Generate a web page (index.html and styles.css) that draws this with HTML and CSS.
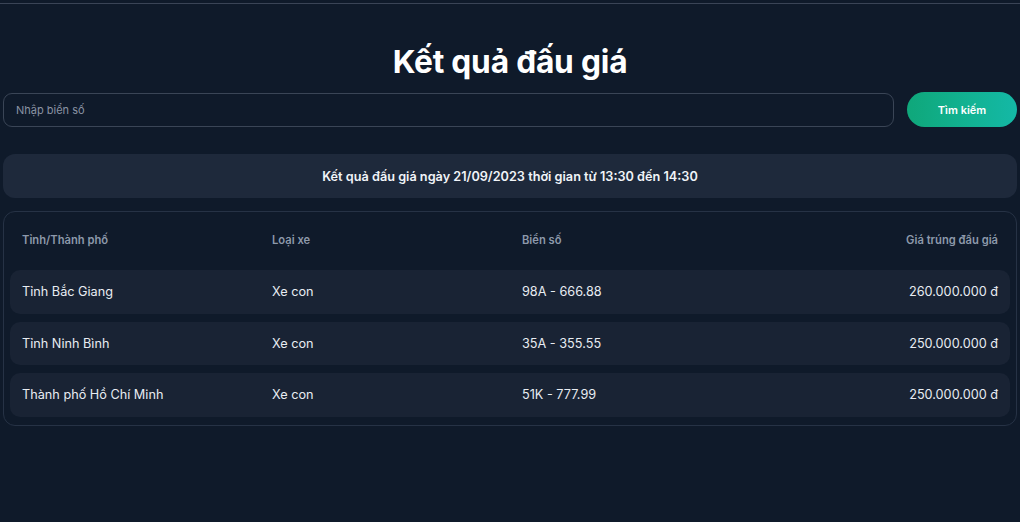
FILE: index.html
```html
<!DOCTYPE html>
<html lang="vi">
<head>
<meta charset="utf-8">
<title>Kết quả đấu giá</title>
<link rel="stylesheet" href="styles.css">
</head>
<body>
<div class="topbar"></div>
<main class="page">
  <h1 class="title">Kết quả đấu giá</h1>
  <form class="search">
    <input class="search-input" type="text" placeholder="Nhập biển số">
    <button class="search-btn" type="button">Tìm kiếm</button>
  </form>
  <div class="banner">Kết quả đấu giá ngày 21/09/2023 thời gian từ 13:30 đến 14:30</div>
  <div class="table">
    <div class="row head">
      <div class="cell">Tỉnh/Thành phố</div>
      <div class="cell">Loại xe</div>
      <div class="cell">Biển số</div>
      <div class="cell right">Giá trúng đấu giá</div>
    </div>
    <div class="row item">
      <div class="cell">Tỉnh Bắc Giang</div>
      <div class="cell">Xe con</div>
      <div class="cell">98A - 666.88</div>
      <div class="cell right">260.000.000 đ</div>
    </div>
    <div class="row item">
      <div class="cell">Tỉnh Ninh Bình</div>
      <div class="cell">Xe con</div>
      <div class="cell">35A - 355.55</div>
      <div class="cell right">250.000.000 đ</div>
    </div>
    <div class="row item">
      <div class="cell">Thành phố Hồ Chí Minh</div>
      <div class="cell">Xe con</div>
      <div class="cell">51K - 777.99</div>
      <div class="cell right">250.000.000 đ</div>
    </div>
  </div>
</main>
</body>
</html>
```

FILE: styles.css
```css
* { box-sizing: border-box; }
html, body {
  margin: 0;
  padding: 0;
  background: #0f1a2a;
  font-family: Inter, "Noto Sans", sans-serif;
  color: #e5e9f0;
}
.topbar {
  height: 4px;
  border-bottom: 1px solid #3a4456;
}
.page {
  padding: 0 3px;
  display: flex;
  flex-direction: column;
}
.title {
  margin: 33px 0 0;
  height: 50px;
  line-height: 50px;
  text-align: center;
  font-size: 31.7px;
  font-weight: 700;
  color: #ffffff;
  letter-spacing: -0.2px;
}
.search {
  margin: 5px 0 0;
  display: flex;
  gap: 13px;
  align-items: center;
}
.search-input {
  flex: 1;
  height: 34px;
  border: 1px solid #3a4556;
  border-radius: 9px;
  background: #0f1a2a;
  color: #e5e9f0;
  padding: 0 12px;
  font-family: Inter, "Noto Sans", sans-serif;
  font-size: 11px;
  outline: none;
}
.search-input::placeholder { color: #8a93a3; }
.search-btn {
  width: 110px;
  height: 35px;
  border: none;
  border-radius: 18px;
  background: linear-gradient(90deg, #0fa77a 0%, #12b394 60%, #14b8a6 100%);
  color: #ffffff;
  font-family: Inter, "Noto Sans", sans-serif;
  font-size: 11px;
  font-weight: 600;
}
.banner {
  margin-top: 27px;
  height: 44px;
  border-radius: 12px;
  background: #1e293b;
  display: flex;
  align-items: center;
  justify-content: center;
  font-size: 12.7px;
  font-weight: 600;
  color: #f1f4f8;
}
.table {
  margin-top: 13px;
  border: 1px solid #263245;
  border-radius: 12px;
  padding: 5px 6px 8px;
  display: flex;
  flex-direction: column;
  gap: 8px;
}
.row {
  display: grid;
  grid-template-columns: repeat(4, 1fr);
  align-items: center;
}
.cell {
  padding: 0 12px;
  white-space: nowrap;
}
.right { text-align: right; }
.head {
  height: 45px;
  font-size: 11.2px;
  font-weight: 600;
  color: #8d99ab;
}
.item {
  height: 43.6px;
  border-radius: 10px;
  background: #192334;
  font-size: 12.7px;
  color: #e8ecf2;
}
```
